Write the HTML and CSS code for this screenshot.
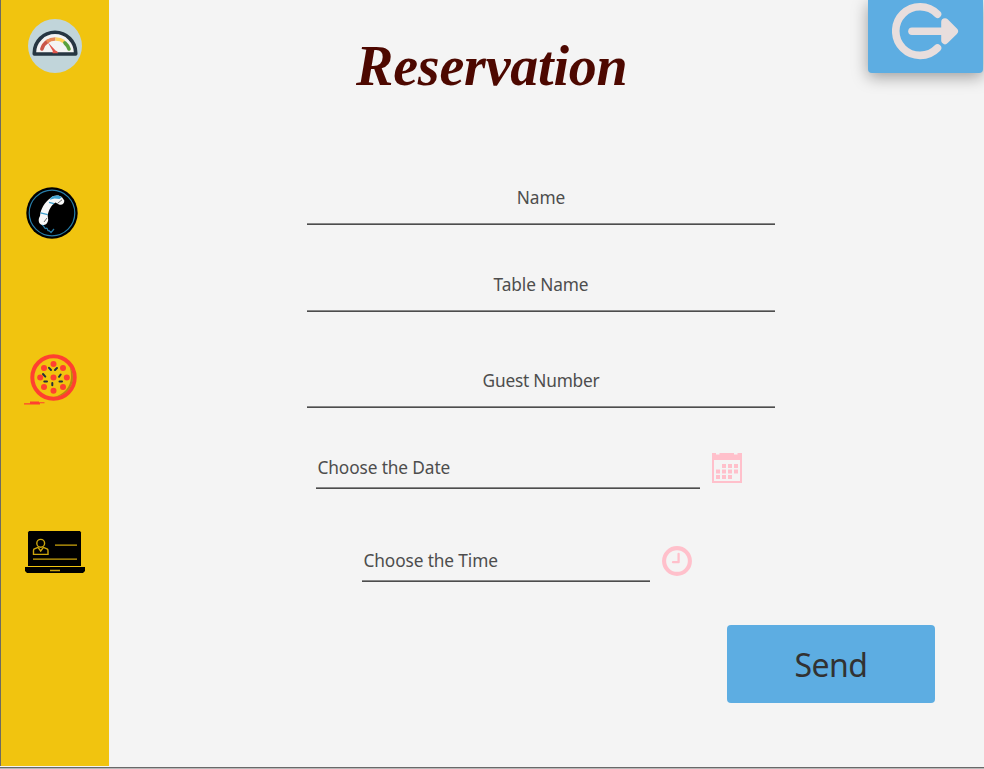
FILE: index.html
```html
<!DOCTYPE html>
<html lang="en">
<head>
<meta charset="utf-8">
<title>Reservation</title>
<link rel="stylesheet" href="styles.css">
</head>
<body>
<div class="window">
  <nav class="sidebar">
    <a class="nav-item gauge" aria-label="Dashboard">
      <svg width="54" height="54" viewBox="0 0 54 54">
        <circle cx="27" cy="27" r="27" fill="#c1d5da"/>
        <path d="M6.3 35V34A20.7 20.7 0 0 1 47.7 34V35Z" fill="#f4f4f4" stroke="#263642" stroke-width="3.6" stroke-linejoin="round"/>
        <g fill="none" stroke-width="3.6">
          <path d="M13.9 30A14 14 0 0 1 19.6 22.3" stroke="#c95548" stroke-linecap="round"/>
          <path d="M18.8 22.8A14.3 14.3 0 0 1 27.5 20" stroke="#e88758"/>
          <path d="M27.5 20A14.3 14.3 0 0 1 36.2 22.8" stroke="#ffd15c"/>
          <path d="M36.9 23.8A14.3 14.3 0 0 1 41 30" stroke="#5aa03c" stroke-linecap="round"/>
        </g>
        <path d="M19.6 23L24.9 32.2Q23.6 34 25 34.3H30Q30 32 27.5 31.4Z" fill="#e2574c"/>
      </svg>
    </a>
    <a class="nav-item phone" aria-label="Contact">
      <svg width="52" height="52" viewBox="0 0 52 52">
        <circle cx="26" cy="26" r="25.7" fill="#000"/>
        <circle cx="26" cy="26" r="22.8" fill="none" stroke="#287da8" stroke-width="1.2"/>
        <path d="M24.5 11C28 8 33 7.8 36 10.3L38.3 13.5C38.5 17 36 18.2 33 17.4L29.5 15.4C25.5 18 22.4 23 21.7 28.7L22.2 33C21.5 37.6 18 38.6 15.3 37.8C12.3 36 12 32.5 14 29C14.6 22 18.5 15.5 24.5 11Z" fill="#f7f7f7"/>
        <path d="M24.5 11C28 8 33 7.8 36 10.3L33.5 12L28.5 11.4L24 12.8Z" fill="#43a5d3"/>
        <path d="M23 15.4L28 16.6M14.5 25.8L21.8 27.6" stroke="#3c9dca" stroke-width="1.3"/>
        <path d="M31.5 16.4L36 12.8M18 35L21 31" stroke="#444" stroke-width=".8"/>
        <path d="M16 38.5C18 37.5 18 42 20 41.5C22 40 21 45 23 43.5L25 45.5L28 42" fill="none" stroke="#287da8" stroke-width="1.2"/>
      </svg>
    </a>
    <a class="nav-item pizza" aria-label="Menu">
      <svg width="64" height="54" viewBox="0 0 64 54">
        <circle cx="31.5" cy="24.5" r="21.2" fill="#f1c40f" stroke="#ff4030" stroke-width="4"/>
        <path d="M47.8 14A19.2 19.2 0 0 1 33 43.7Q47.5 39 49 25Q49.2 19 47.8 14Z" fill="#b98710"/>
        <g fill="#ff4030">
          <circle cx="31.5" cy="24.5" r="3"/><circle cx="31.5" cy="11" r="3"/><circle cx="31.5" cy="37.8" r="3"/>
          <circle cx="18.2" cy="24.5" r="3"/><circle cx="44.8" cy="24.5" r="3"/><circle cx="22" cy="15" r="3"/>
          <circle cx="41" cy="15" r="3"/><circle cx="22" cy="34" r="3"/><circle cx="41" cy="34" r="3"/>
        </g>
        <path d="M27 14.8L29 17M33 17L35 15M21 21L23.3 23.6M37 23.8L38.7 21.5M22.3 28.4H25M37.5 28.4H40M30.3 30V32.3" stroke="#24303a" stroke-width="2" stroke-linecap="round"/>
        <path d="M8 48.5H17V49.2H22.5V50.3H18V51.5H2V50.3H8Z" fill="#ff4030"/>
      </svg>
    </a>
    <a class="nav-item laptop" aria-label="Account">
      <svg width="60" height="42" viewBox="0 0 60 42">
        <path d="M4 0H55L56 1.5V35H3V1.5Z"/>
        <path d="M0 36H60V40L58 42H2L0 40Z"/>
        <g fill="none" stroke="#cda50d" stroke-width="1.4">
          <circle cx="15.7" cy="12.3" r="3.9"/>
          <path d="M13 16.3L9 18Q8.5 18.6 8.5 20V23.4H23V20Q23 18.6 22.4 18L18.4 16.3M13 16.3L15.7 20L18.4 16.3"/>
          <path d="M30 14.1H52M8 28.1H52M25 39.5H35"/>
        </g>
      </svg>
    </a>
  </nav>
  <main class="page">
    <header class="top">
      <h1 class="title">Reservation</h1>
      <button class="logout" aria-label="Log out">
        <svg width="68" height="58" viewBox="0 0 68 58" fill="none" stroke="#e8dedd" stroke-width="7.6" stroke-linecap="round" stroke-linejoin="round">
          <path d="M45.5 12.2A24.3 24.3 0 1 0 45.5 46"/>
          <path d="M20 29.2H58"/>
          <path d="M53 20L62.2 29.2L53 38.4Z" fill="#e8dedd"/>
        </svg>
      </button>
    </header>
    <form class="form">
      <div class="field name"><span>Name</span></div>
      <div class="field table"><span>Table Name</span></div>
      <div class="field guests"><span>Guest Number</span></div>
      <div class="picker date">
        <div class="field"><span>Choose the Date</span></div>
        <svg width="30" height="30" viewBox="0 0 30 30" fill="#ffc0cb">
          <path fill-rule="evenodd" d="M0 0H4V1.5H7.5V0H22V1.5H25.5V0H30V30H0ZM2 7V28H28V7Z"/>
          <path d="M10 11h4v4h-4zM16 11h4v4h-4zM22 11h4v4h-4zM4 16.5h4v4h-4zM10 16.5h4v4h-4zM16 16.5h4v4h-4zM22 16.5h4v4h-4zM4 22h4v4h-4zM10 22h4v4h-4zM16 22h4v4h-4z"/>
        </svg>
      </div>
      <div class="picker time">
        <div class="field"><span>Choose the Time</span></div>
        <svg width="30" height="30" viewBox="0 0 30 30" fill="none" stroke="#ffc0cb">
          <circle cx="15" cy="15" r="12.9" stroke-width="4.1"/>
          <path d="M16.6 7.8V16.2H11" stroke-width="2.3" stroke-linecap="round" stroke-linejoin="round"/>
        </svg>
      </div>
      <button class="send" type="button">Send</button>
    </form>
  </main>
</div>
</body>
</html>
```
FILE: styles.css
```css
* { box-sizing: border-box; }
body { margin: 0; background: #f3f3f3; font-family: "Noto Sans", "Open Sans", sans-serif; }
.window {
  display: flex;
  width: 984px;
  height: 769px;
  overflow: hidden;
  border-bottom: 1px solid #b8b8b8;
  box-shadow: inset 0 -1px #696969;
  background: #f4f4f4;
}
.sidebar {
  width: 109px;
  height: 766px;
  background: #f1c40f;
  border-left: 1px solid #6f6b60;
}
.nav-item { display: block; }
.nav-item svg, .picker svg, .logout svg { display: block; }
.gauge { margin: 19px 0 0 27px; }
.phone { margin: 114px 0 0 25px; }
.pizza { margin: 114px 0 0 21px; }
.laptop { margin: 124px 0 0 24px; }
.page { width: 875px; }
.top { display: flex; justify-content: space-between; height: 182px; }
.title {
  margin: 34px 0 0 247px;
  font: italic bold 56px/64px "Liberation Serif", serif;
  letter-spacing: -.2px;
  color: #4d0800;
}
.logout {
  width: 115px;
  height: 73px;
  margin-right: 1px;
  padding: 2px 0 0 24px;
  border: 0;
  border-radius: 0 0 4px 4px;
  background: #5dade2;
  box-shadow: 0 4px 16px rgba(0, 0, 0, .36);
  display: flex;
}
.form { display: flex; flex-direction: column; align-items: flex-start; }
.field {
  display: flex;
  justify-content: center;
  height: 43px;
  width: 468px;
  border-bottom: 1px solid #4d4d4d;
  box-shadow: inset 0 -1px #888;
  color: #4d4d4d;
  font-size: 17.3px;
  letter-spacing: -.12px;
  line-height: 32px;
}
.name { margin-left: 198px; }
.table { margin: 44px 0 0 198px; }
.guests { margin: 53px 0 0 198px; }
.guests span { letter-spacing: -.22px; }
.picker { display: flex; gap: 12px; }
.picker .field { justify-content: flex-start; height: 37px; padding-left: 1.5px; }
.date { margin: 44px 0 0 207px; }
.date .field { width: 384px; }
.date svg { margin-top: 1px; }
.time { margin: 56px 0 0 253px; }
.time .field { width: 288px; }
.time svg { margin-top: 1px; }
.send {
  width: 208px;
  height: 78px;
  margin: 43px 0 0 618px;
  padding: 1px 0 0;
  border: 0;
  border-radius: 4px;
  background: #5dade2;
  color: #323232;
  font: 32px/77px "Noto Sans", "Open Sans", sans-serif;
  letter-spacing: -.5px;
}
```
